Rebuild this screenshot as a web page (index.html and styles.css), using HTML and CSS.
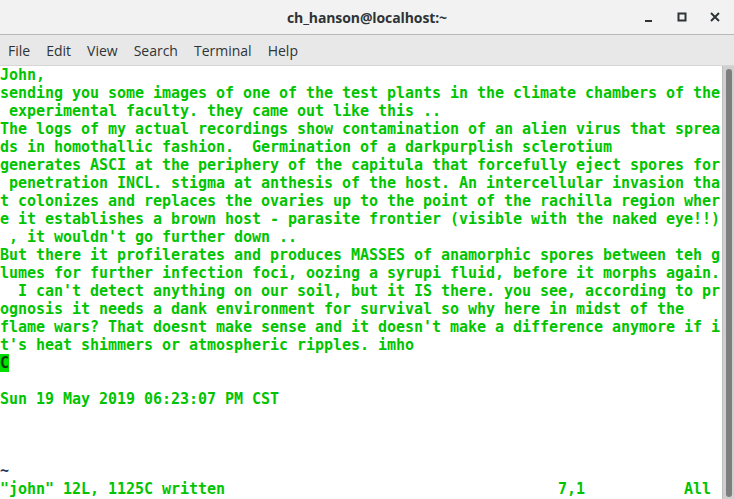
FILE: index.html
```html
<!DOCTYPE html>
<html>
<head>
<meta charset="utf-8">
<link rel="stylesheet" href="styles.css">
</head>
<body>
<div class="window">
  <header class="titlebar">
    <div class="title">ch_hanson@localhost:~</div>
    <div class="controls">
      <svg class="btn" width="14" height="14" viewBox="0 0 14 14"><rect x="3" y="10" width="7" height="2" fill="#2e3436"/></svg>
      <svg class="btn" width="14" height="14" viewBox="0 0 14 14"><rect x="3.5" y="3.5" width="7" height="7" fill="none" stroke="#2e3436" stroke-width="2"/></svg>
      <svg class="btn" width="14" height="14" viewBox="0 0 14 14"><path d="M3 3 L11 11 M11 3 L3 11" stroke="#2e3436" stroke-width="2"/></svg>
    </div>
  </header>
  <nav class="menubar">
    <span class="m">File</span>
    <span class="m">Edit</span>
    <span class="m">View</span>
    <span class="m">Search</span>
    <span class="m">Terminal</span>
    <span class="m">Help</span>
  </nav>
  <main class="term">
    <div class="screen">
<div class="row">John,</div>
<div class="row">sending you some images of one of the test plants in the climate chambers of the</div>
<div class="row"> experimental faculty. they came out like this ..</div>
<div class="row">The logs of my actual recordings show contamination of an alien virus that sprea</div>
<div class="row">ds in homothallic fashion.  Germination of a darkpurplish sclerotium</div>
<div class="row">generates ASCI at the periphery of the capitula that forcefully eject spores for</div>
<div class="row"> penetration INCL. stigma at anthesis of the host. An intercellular invasion tha</div>
<div class="row">t colonizes and replaces the ovaries up to the point of the rachilla region wher</div>
<div class="row">e it establishes a brown host - parasite frontier (visible with the naked eye!!)</div>
<div class="row"> , it wouldn't go further down ..</div>
<div class="row">But there it profilerates and produces MASSES of anamorphic spores between teh g</div>
<div class="row">lumes for further infection foci, oozing a syrupi fluid, before it morphs again.</div>
<div class="row">  I can't detect anything on our soil, but it IS there. you see, according to pr</div>
<div class="row">ognosis it needs a dank environment for survival so why here in midst of the</div>
<div class="row">flame wars? That doesnt make sense and it doesn't make a difference anymore if i</div>
<div class="row">t's heat shimmers or atmospheric ripples. imho</div>
<div class="row"><span class="cursor">C</span></div>
<div class="row"> </div>
<div class="row">Sun 19 May 2019 06:23:07 PM CST</div>
<div class="row"> </div>
<div class="row"> </div>
<div class="row"> </div>
<div class="row"><span class="tilde">~</span></div>
<div class="row status"><span class="msg">"john" 12L, 1125C written</span><span class="ruler">7,1</span><span class="all">All</span></div>
    </div>
    <div class="scrollbar"><div class="thumb"></div></div>
  </main>
</div>
</body>
</html>
```
FILE: styles.css
```css
html, body {
  margin: 0;
  padding: 0;
  background: #ffffff;
}
.window {
  width: 734px;
  height: 499px;
  display: flex;
  flex-direction: column;
  overflow: hidden;
}
.titlebar {
  height: 35px;
  flex: none;
  background: #f2f2f2;
  border-bottom: 1px solid #b8b8b8;
  display: flex;
  align-items: center;
  justify-content: center;
  position: relative;
  box-sizing: border-box;
}
.title {
  font-family: "Open Sans", "Noto Sans", sans-serif;
  font-weight: bold;
  font-size: 14px;
  color: #2e3436;
  letter-spacing: -0.1px;
}
.controls {
  position: absolute;
  right: 12px;
  top: 10px;
  display: flex;
  gap: 19px;
}
.menubar {
  height: 31px;
  flex: none;
  background: #e8e8e8;
  border-bottom: 1px solid #d6d6d6;
  box-sizing: border-box;
  display: flex;
  align-items: center;
  padding-left: 8px;
  gap: 16px;
  font-family: "Open Sans", "Noto Sans", sans-serif;
  font-size: 14px;
  color: #2e3436;
}
.term {
  flex: 1;
  display: flex;
  background: #ffffff;
  min-height: 0;
}
.screen {
  width: 722px;
  flex: none;
  font-family: "DejaVu Sans Mono", "Liberation Mono", monospace;
  font-size: 15px;
  font-weight: bold;
  letter-spacing: -0.03px;
  color: #00c400;
  overflow: hidden;
}
.row {
  height: 18px;
  line-height: 18px;
  white-space: pre;
}
.cursor {
  background: #00e000;
  color: #0a3a0a;
  display: inline-block;
  width: 9px;
}
.tilde {
  color: #2a3a5c;
}
.status {
  display: flex;
}
.msg { width: 558px; }
.ruler { width: 126px; }
.scrollbar {
  flex: 1;
  background: #cfcfcf;
  border-left: 1px solid #bdbdbd;
  display: flex;
  justify-content: center;
  padding: 3px 0 2px;
}
.thumb {
  width: 6px;
  background: #7d7f7e;
  border-radius: 3px;
}
```
